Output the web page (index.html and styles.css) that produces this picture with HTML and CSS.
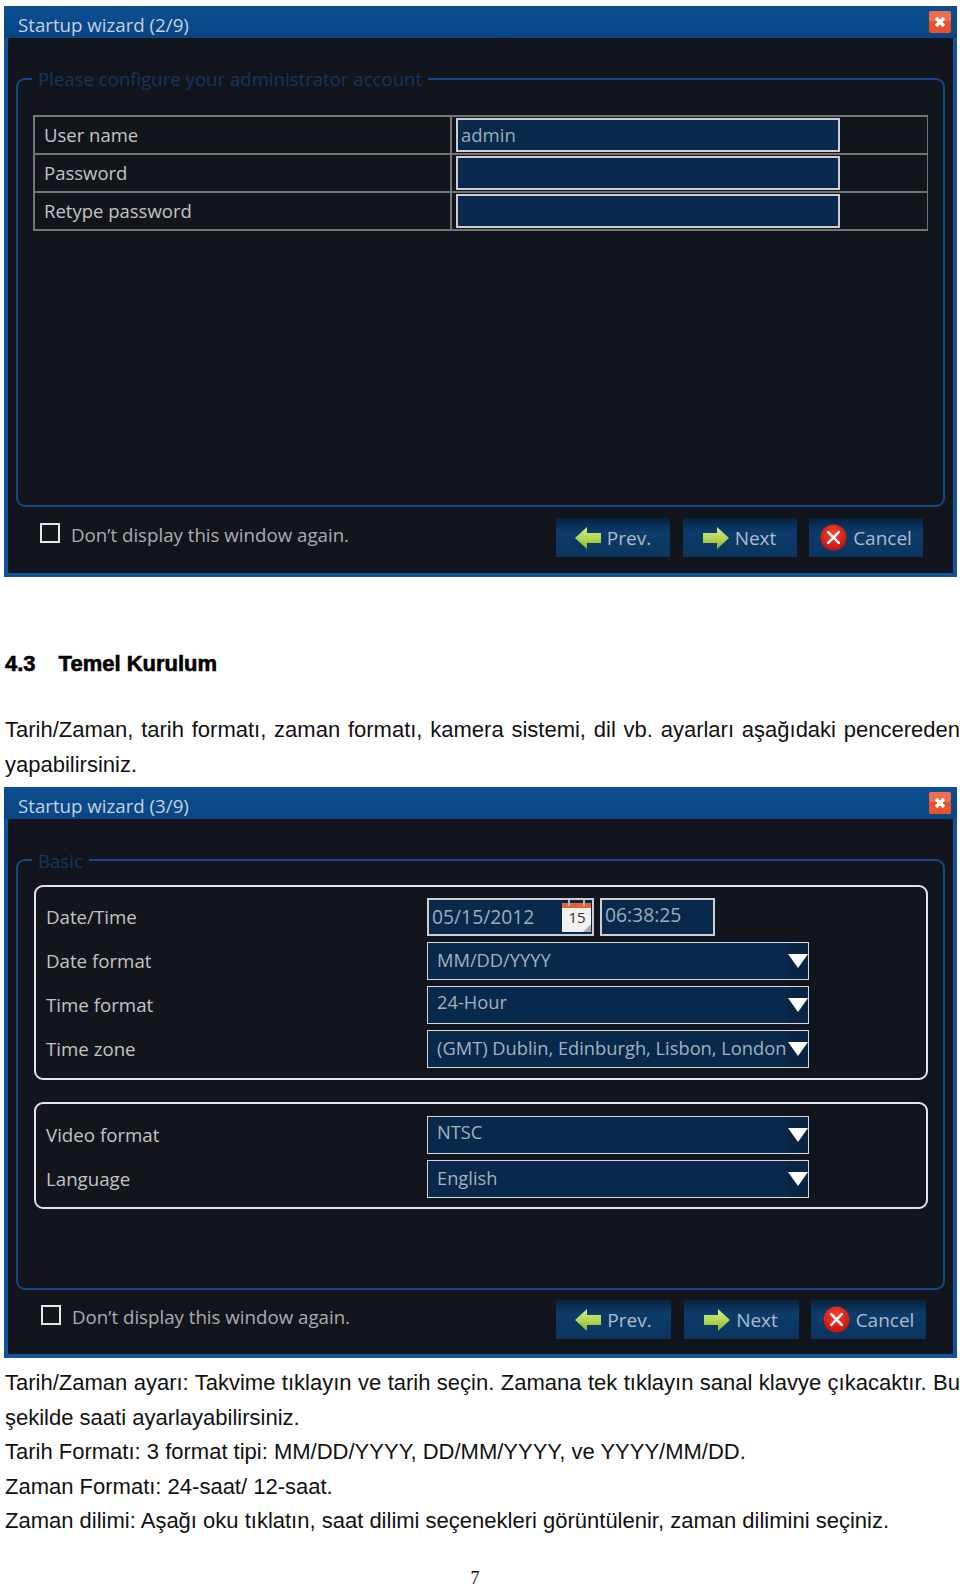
FILE: index.html
```html
<!DOCTYPE html>
<html>
<head>
    <title>Temel Kurulum</title>
    <link rel="stylesheet" href="styles.css">
</head>
<body>
<svg class="defs" width="0" height="0">
    <defs>
        <linearGradient id="arrowFill" x1="0" y1="0" x2="0" y2="1">
            <stop offset="0" stop-color="#d8ec8e"/>
            <stop offset="0.55" stop-color="#b2d553"/>
            <stop offset="1" stop-color="#86ae2a"/>
        </linearGradient>
        <radialGradient id="cancelFill" cx="0.5" cy="0.35" r="0.7">
            <stop offset="0" stop-color="#f5452e"/>
            <stop offset="1" stop-color="#c20f0b"/>
        </radialGradient>
        <symbol id="arrowLeft" viewBox="0 0 26 22">
            <path d="M0 11 L12 0 V6 H26 V16 H12 V22 Z" fill="url(#arrowFill)"/>
        </symbol>
        <symbol id="arrowRight" viewBox="0 0 26 22">
            <path d="M26 11 L14 0 V6 H0 V16 H14 V22 Z" fill="url(#arrowFill)"/>
        </symbol>
        <symbol id="cancelIcon" viewBox="0 0 28 28">
            <circle cx="14" cy="14" r="13.5" fill="url(#cancelFill)"/>
            <path d="M8.5 8.5 L19.5 19.5 M19.5 8.5 L8.5 19.5" stroke="#fff" stroke-width="2.6" stroke-linecap="round"/>
        </symbol>
        <symbol id="closeIcon" viewBox="0 0 22 22">
            <rect width="22" height="22" rx="2" fill="#e8522c"/>
            <rect width="22" height="10" rx="2" fill="#f0826a" opacity="0.6"/>
            <path d="M7 7 L15 15 M15 7 L7 15" stroke="#fff" stroke-width="3.4"/>
        </symbol>
        <symbol id="caret" viewBox="0 0 20 14">
            <path d="M0 0 H20 L10 14 Z" fill="#fff"/>
        </symbol>
    </defs>
</svg>

<section class="window">
    <header class="titlebar">
        <span>Startup wizard (2/9)</span>
        <svg class="close"><use href="#closeIcon"/></svg>
    </header>
    <fieldset class="panel">
        <legend>Please configure your administrator account</legend>
        <table class="account">
            <tr>
                <td class="name">User name</td>
                <td class="value"><div class="entry">admin</div></td>
            </tr>
            <tr>
                <td class="name">Password</td>
                <td class="value"><div class="entry"></div></td>
            </tr>
            <tr>
                <td class="name">Retype password</td>
                <td class="value"><div class="entry"></div></td>
            </tr>
        </table>
    </fieldset>
    <footer class="actions">
        <span class="check"></span>
        <span class="again">Don’t display this window again.</span>
        <div class="buttons">
            <button><svg class="arrow"><use href="#arrowLeft"/></svg>Prev.</button>
            <button><svg class="arrow"><use href="#arrowRight"/></svg>Next</button>
            <button><svg class="cancel"><use href="#cancelIcon"/></svg>Cancel</button>
        </div>
    </footer>
</section>

<h2>4.3<span class="title">Temel Kurulum</span></h2>
<p class="intro">Tarih/Zaman, tarih formatı, zaman formatı, kamera sistemi, dil vb. ayarları aşağıdaki pencereden yapabilirsiniz.</p>

<section class="window second">
    <header class="titlebar">
        <span>Startup wizard (3/9)</span>
        <svg class="close"><use href="#closeIcon"/></svg>
    </header>
    <fieldset class="panel">
        <legend>Basic</legend>
        <div class="group">
            <div class="row">
                <span class="label">Date/Time</span>
                <div class="date entry">05/15/2012
                    <svg class="calendar" viewBox="0 0 29 32">
                        <rect y="3" width="29" height="29" rx="1" fill="#f1f1ee"/>
                        <path d="M0 4 a1 1 0 0 1 1 -1 H28 a1 1 0 0 1 1 1 V8 H0 Z" fill="#e2623a"/>
                        <rect x="6" y="0" width="2" height="6" fill="#b9b4ac"/>
                        <rect x="21" y="0" width="2" height="6" fill="#b9b4ac"/>
                        <path d="M29 24 V32 H21 Z" fill="#a9a9a9"/>
                        <text x="15" y="23" font-size="15" fill="#333" text-anchor="middle">15</text>
                    </svg>
                </div>
                <div class="time entry">06:38:25</div>
            </div>
            <div class="row">
                <span class="label">Date format</span>
                <div class="select">MM/DD/YYYY<span class="drop"><svg class="caret"><use href="#caret"/></svg></span></div>
            </div>
            <div class="row">
                <span class="label">Time format</span>
                <div class="select raised">24-Hour<span class="drop"><svg class="caret"><use href="#caret"/></svg></span></div>
            </div>
            <div class="row">
                <span class="label">Time zone</span>
                <div class="select">(GMT) Dublin, Edinburgh, Lisbon, London<span class="drop"><svg class="caret"><use href="#caret"/></svg></span></div>
            </div>
        </div>
        <div class="group">
            <div class="row">
                <span class="label">Video format</span>
                <div class="select raised">NTSC<span class="drop"><svg class="caret"><use href="#caret"/></svg></span></div>
            </div>
            <div class="row">
                <span class="label">Language</span>
                <div class="select">English<span class="drop"><svg class="caret"><use href="#caret"/></svg></span></div>
            </div>
        </div>
    </fieldset>
    <footer class="actions">
        <span class="check"></span>
        <span class="again">Don’t display this window again.</span>
        <div class="buttons">
            <button><svg class="arrow"><use href="#arrowLeft"/></svg>Prev.</button>
            <button><svg class="arrow"><use href="#arrowRight"/></svg>Next</button>
            <button><svg class="cancel"><use href="#cancelIcon"/></svg>Cancel</button>
        </div>
    </footer>
</section>

<div class="notes">
    <p class="intro">Tarih/Zaman ayarı: Takvime tıklayın ve tarih seçin. Zamana tek tıklayın sanal klavye çıkacaktır. Bu şekilde saati ayarlayabilirsiniz.</p>
    <p>Tarih Formatı: 3 format tipi: MM/DD/YYYY, DD/MM/YYYY, ve YYYY/MM/DD.</p>
    <p>Zaman Formatı: 24-saat/ 12-saat.</p>
    <p>Zaman dilimi: Aşağı oku tıklatın, saat dilimi seçenekleri görüntülenir, zaman dilimini seçiniz.</p>
</div>
<div class="pagenum">7</div>
</body>
</html>
```

FILE: styles.css
```css
html, body {
    margin: 0;
    height: 1587px;
    overflow: hidden;
}
body {
    background: #fff;
    color: #111;
    font-family: "Liberation Sans", Arial, sans-serif;
    font-size: 22px;
    padding-top: 6px;
    box-sizing: border-box;
}
.defs {
    position: absolute;
}

/* wizard window */
.window {
    box-sizing: border-box;
    width: 953px;
    height: 571px;
    margin-left: 4px;
    background: #13151d;
    border: 4px solid #125299;
    border-top: none;
    display: flex;
    flex-direction: column;
    font-family: "Open Sans", sans-serif;
}
.second {
    margin-top: 5px;
}
.titlebar {
    height: 32px;
    margin: 0 -4px;
    padding: 0 6px 0 14px;
    background: linear-gradient(#0b4f94, #0a4582);
    color: #c3d2e0;
    font-size: 18.7px;
    display: flex;
    align-items: center;
    justify-content: space-between;
}
.titlebar span {
    margin-top: 4px;
}
.close {
    width: 22px;
    height: 22px;
}
.panel {
    flex: 1;
    margin: 30px 8px 0;
    padding: 0;
    min-width: 0;
    border: 2px solid #134a85;
    border-radius: 9px;
}
.panel legend {
    margin-left: 14px;
    padding: 0 6px;
    color: #15365e;
    font-size: 18.6px;
    line-height: 22px;
}
.second .panel legend {
    position: relative;
    top: 1px;
}

/* account table */
.account {
    width: 895px;
    margin: 25px 0 0 15px;
    border-collapse: collapse;
    color: #c4c4c4;
    font-size: 18.5px;
}
.account td {
    height: 36px;
    padding: 0;
    border: 2px solid #757575;
}
.account td.name {
    width: 406px;
    height: 34px;
    padding: 0 0 2px 9px;
}
.account td.value {
    border-right: 1px solid #757575;
}
.entry {
    box-sizing: border-box;
    border: 2px solid #c9cfd4;
    background: #08284c;
    color: #9fadba;
    font-size: 18.5px;
}
.account .entry {
    width: 384px;
    height: 34px;
    margin-left: 4px;
    padding-left: 3px;
    line-height: 30px;
}

/* basic settings */
.group {
    box-sizing: border-box;
    margin: 0 15px 22px 16px;
    padding: 11px 0 10px 10px;
    border: 2px solid #e3e6e8;
    border-radius: 9px;
    color: #c4c4c4;
    font-size: 18.7px;
    display: flex;
    flex-direction: column;
    gap: 6px;
}
.group:first-of-type {
    margin-top: 14px;
}
.group:last-of-type {
    padding: 12px 0 9px 10px;
}
.row {
    display: flex;
    align-items: center;
    height: 38px;
}
.label {
    width: 381px;
    margin-bottom: 2px;
}
.date {
    position: relative;
    width: 167px;
    height: 38px;
    padding: 3px 0 0 3px;
    font-size: 19.3px;
}
.calendar {
    position: absolute;
    right: 1px;
    top: 0;
    width: 29px;
    height: 32px;
}
.time {
    width: 115px;
    height: 38px;
    margin-left: 6px;
    padding: 1px 0 0 3px;
    font-size: 19.3px;
}
.select {
    box-sizing: border-box;
    width: 382px;
    height: 38px;
    padding-left: 9px;
    border: 1px solid #d5dade;
    background: #08284c;
    color: #a5b1bd;
    font-size: 18.3px;
    line-height: 34px;
    display: flex;
    justify-content: space-between;
}
.raised {
    line-height: 30px;
}
.drop {
    width: 21px;
    background: #0a2544;
    display: flex;
    align-items: center;
    justify-content: center;
}
.caret {
    width: 20px;
    height: 14px;
}

/* bottom of the window */
.actions {
    height: 66px;
    padding: 0 30px 5px 32px;
    box-sizing: border-box;
    display: flex;
    align-items: center;
    color: #a9adb2;
    font-size: 18.7px;
}
.second .actions {
    height: 64px;
    padding: 0 27px 5px 33px;
}
.check {
    box-sizing: border-box;
    width: 20px;
    height: 20px;
    margin: -10px 11px 0 0;
    border: 2px solid #e8e8e8;
}
.again {
    margin-top: -6px;
}
.buttons {
    margin-left: auto;
    display: flex;
    gap: 12.5px;
}
.buttons button {
    box-sizing: border-box;
    width: 114px;
    height: 39px;
    padding: 0;
    border: none;
    background: linear-gradient(#08223f, #0c3c6b 35%, #0a3560);
    color: #aebccb;
    font-family: "Open Sans", sans-serif;
    font-size: 19px;
    display: flex;
    align-items: center;
    justify-content: center;
    gap: 6px;
}
.second .buttons button {
    width: 115px;
}
.arrow {
    width: 26px;
    height: 22px;
}
.cancel {
    width: 27px;
    height: 27px;
}

/* document text */
h2 {
    margin: 75px 0 0 5px;
    font-size: 22px;
    line-height: 24px;
    font-weight: bold;
    -webkit-text-stroke: 0.6px #000;
    color: #000;
}
h2 .title {
    margin-left: 23px;
}
p {
    margin: 0;
    line-height: 34.5px;
}
.intro {
    text-align: justify;
}
h2 + .intro {
    margin: 37px 0 0 5px;
}
.notes {
    margin: 8px 0 0 5px;
}
.pagenum {
    margin-top: 31px;
    padding-right: 10px;
    text-align: center;
    font-family: "Liberation Serif", serif;
    font-size: 18px;
    line-height: 16px;
}
```
